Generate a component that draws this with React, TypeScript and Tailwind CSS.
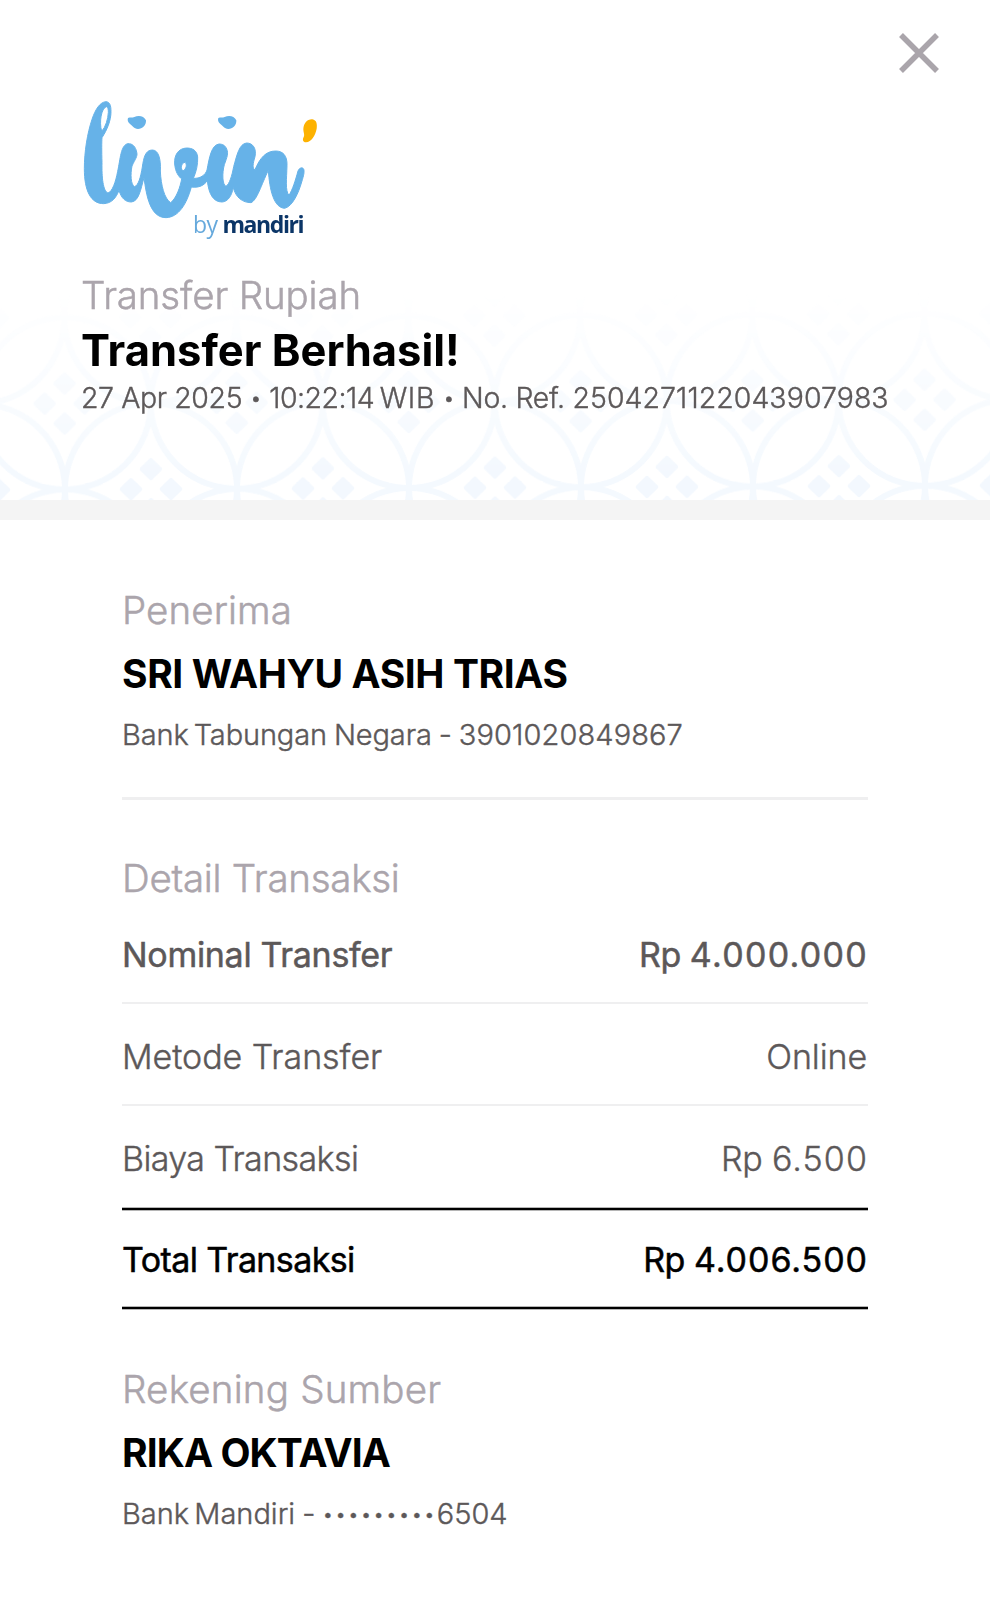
import type { ReactNode } from 'react';

const columns = [-2, -1, 0, 1, 2, 3, 4, 5, 6];

function Medallion({ x, y }: { x: number; y: number }) {
  return (
    <g transform={`translate(${x} ${y})`}>
      <circle r="86" fill="none" stroke="#f4f9fe" strokeWidth="6" />
      {[[0, -20], [20, 0], [0, 20], [-20, 0]].map(([dx, dy]) => (
        <rect
          key={`${dx},${dy}`}
          x="-8.5"
          y="-8.5"
          width="17"
          height="17"
          rx="2"
          transform={`translate(${dx} ${dy}) rotate(45)`}
          fill="#f3f8fe"
        />
      ))}
    </g>
  );
}

function Pattern() {
  return (
    <svg className="absolute bottom-0 left-0 h-[220px] w-full" viewBox="0 280 990 220" aria-hidden="true">
      <defs>
        <linearGradient id="fade" x1="0" y1="0" x2="0" y2="1">
          <stop offset="0.05" stopColor="#000" />
          <stop offset="0.9" stopColor="#fff" />
        </linearGradient>
        <mask id="fadeMask">
          <rect x="0" y="280" width="990" height="220" fill="url(#fade)" />
        </mask>
      </defs>
      <g mask="url(#fadeMask)">
        <g transform="translate(0 2.5) rotate(-0.25 65 487)">
          {columns.map((c) => (
            <g key={c}>
              <Medallion x={65 + c * 172} y={401} />
              <Medallion x={65 + c * 172} y={573} />
              <Medallion x={151 + c * 172} y={315} />
              <Medallion x={151 + c * 172} y={487} />
            </g>
          ))}
        </g>
      </g>
    </svg>
  );
}

function Logo() {
  return (
    <div className="relative h-[160px] w-[260px]">
      <svg className="h-full w-full" viewBox="0 0 780 480" aria-hidden="true">
        <path
          fill="#66b2e8"
          stroke="#66b2e8"
          strokeWidth="3"
          strokeLinejoin="round"
          fillRule="evenodd"
          d="M108 35 C90 36 76 58 66 88 C52 130 43 185 43 236 C43 302 62 341 101 341 C124 340 138 325 147 301 C154 325 166 336 184 336 C207 334 212 298 222 263 C229 316 240 383 288 383 C326 382 350 342 364 291 C388 294 402 286 412 272 C416 312 430 336 456 336 C474 335 485 318 490 292 C496 322 518 338 543 338 C561 331 574 284 595 241 C599 300 611 353 644 355 C668 349 686 308 695 276 C701 257 704 245 701 237 C696 230 688 234 684 243 C676 272 668 298 657 316 C645 302 650 268 651 226 C652 197 639 183 617 183 C587 183 570 204 555 239 C546 237 549 219 555 200 C560 176 549 159 530 159 C508 161 501 194 491 230 C486 257 478 283 468 289 C457 284 456 250 463 224 C471 202 476 190 470 177 C466 166 457 162 447 162 C424 165 418 203 411 240 C406 256 390 266 370 265 C379 246 384 222 383 201 C381 181 367 174 350 174 C325 175 312 195 314 222 C316 246 326 260 335 267 C331 289 320 324 302 338 C283 326 273 286 271 243 C273 208 266 180 247 180 C226 180 221 203 217 231 C212 262 205 286 194 290 C182 285 181 252 186 228 C195 208 204 199 200 186 C197 170 187 160 174 161 C152 164 151 208 143 244 C137 276 127 305 114 309 C99 304 95 261 96 218 C95 184 95 157 96 143 C111 120 123 92 123 65 C123 45 119 36 108 35 Z M109 50 C94 55 87 96 95 124 C107 111 114 87 115 67 C115 58 114 51 109 50 Z M345 217 C333 219 331 237 339 243 C349 237 352 223 345 217 Z"
        />
        {[0, 271].map((x) => (
          <path
            key={x}
            transform={`translate(${x} 0)`}
            fill="#66b2e8"
            d="M174 84 C180 81 187 84 193 81 C205 75 222 77 228 91 C229 106 217 117 204 117 C191 116 188 107 180 102 C173 96 172 90 174 84 Z"
          />
        ))}
        <path
          fill="#fdb200"
          d="M727 88 C740 90 742 103 740 116 C736 137 724 155 708 157 C698 157 697 148 701 141 C705 135 700 128 700 117 C701 100 712 87 727 88 Z"
        />
      </svg>
      <div className="absolute top-[119px] left-[123px] flex items-baseline gap-[5px] font-['Open_Sans',sans-serif] text-[23px] leading-[30px]">
        <span className="tracking-[-0.6px] text-[#66a9dc]">by</span>
        <span className="font-bold tracking-[-1.4px] text-[#0b3567]">mandiri</span>
      </div>
    </div>
  );
}

function Label({ className, children }: { className: string; children: ReactNode }) {
  return (
    <h2 className={`text-[38.5px] leading-[50px] font-light text-[#aba5ac] [-webkit-text-stroke:0.5px_#aba5ac] ${className}`}>
      {children}
    </h2>
  );
}

function Bullet() {
  return <span className="inline-block w-[27px] text-center align-[3px] text-[20px] leading-none">•</span>;
}

export default function App() {
  return (
    <main className="h-[1599px] w-[990px] overflow-hidden bg-white font-[Inter,sans-serif] whitespace-nowrap text-black">
      <header className="relative h-[500px]">
        <Pattern />
        <button aria-label="Tutup" className="absolute top-[33px] right-[51px]">
          <svg className="size-10" viewBox="0 0 40 40" fill="none" stroke="#aaa5ab" strokeWidth="5.5">
            <path d="M2 2 L38 38 M38 2 L2 38" />
          </svg>
        </button>
        <div className="relative pt-[90px]">
          <div className="pl-[70px]">
            <Logo />
          </div>
          <div className="pt-5 pl-[81px]">
            <Label className="tracking-[-0.15px]">Transfer Rupiah</Label>
            <h1 className="mt-[3px] text-[43.5px] leading-[54px] font-bold">Transfer Berhasil!</h1>
            <p className="mt-1 text-[28.5px] leading-[34px] font-light tracking-[-0.4px] text-[#5c5859] [-webkit-text-stroke:0.4px_#5c5859]">
              27 Apr 2025
              <Bullet />
              <span className="tracking-[-0.5px] [word-spacing:-2px]">
                10:22:14 <span className="tracking-[0.6px]">WIB</span>
              </span>
              <Bullet />
              <span className="tracking-[-0.3px]">No. Ref. </span>
              <span className="tracking-[0.05px]">2504271122043907983</span>
            </p>
          </div>
        </div>
      </header>
      <div className="h-5 bg-[#f4f4f4]" />
      <div className="w-[868px] pt-[65px] pl-[122px]">
        <section className="border-b-[3px] border-[#efeff0] pb-[42px]">
          <Label className="tracking-[0.1px]">Penerima</Label>
          <p className="mt-[14px] text-[39px] leading-[50px] font-bold tracking-[-0.4px]">SRI WAHYU ASIH TRIAS</p>
          <p className="mt-4 text-[29px] leading-[40px] font-light tracking-[-0.13px] text-[#5c5859] [-webkit-text-stroke:0.4px_#5c5859]">
            <span className="[word-spacing:-3px]">Bank Tabungan</span>
            <span className="[word-spacing:-1px]"> Negara - </span>
            <span className="tracking-[0.1px]">3901020849867</span>
          </p>
        </section>
        <section className="pt-[53px]">
          <Label className="tracking-[-0.27px]">Detail Transaksi</Label>
          <dl className="text-[34px] leading-[60px] text-[#5c5859]">
            <div className="flex h-[101px] justify-between border-b-2 border-[#efeff0] pt-[22px] [-webkit-text-stroke:0.5px_#5c5859]">
              <dt className="tracking-[-0.3px]">Nominal Transfer</dt>
              <dd className="tracking-[-0.5px]">
                Rp <span className="tracking-[1.3px]">4.000.000</span>
              </dd>
            </div>
            <div className="flex h-[102px] justify-between border-b-2 border-[#efeff0] pt-[23px] font-light [-webkit-text-stroke:0.4px_#5c5859]">
              <dt className="tracking-[-0.05px]">Metode Transfer</dt>
              <dd className="pr-px tracking-[-0.1px]">Online</dd>
            </div>
            <div className="flex h-[104px] justify-between border-b-2 border-black pt-[23px] font-light shadow-[0_1px_0_#b5b5b5,inset_0_-1px_0_#b5b5b5] [-webkit-text-stroke:0.4px_#5c5859]">
              <dt className="tracking-[-0.6px]">Biaya Transaksi</dt>
              <dd className="tracking-[-0.2px]">
                Rp <span className="tracking-[1.1px]">6.500</span>
              </dd>
            </div>
            <div className="flex h-[99px] justify-between border-b-2 border-black pt-[20px] text-black shadow-[0_1px_0_#b5b5b5,inset_0_-1px_0_#b5b5b5] [-webkit-text-stroke:0.5px_#000]">
              <dt className="tracking-[-0.6px]">Total Transaksi</dt>
              <dd className="tracking-[-0.5px]">
                Rp <span className="tracking-[0.95px]">4.006.500</span>
              </dd>
            </div>
          </dl>
        </section>
        <section className="pt-[55px]">
          <Label className="tracking-[0.2px]">Rekening Sumber</Label>
          <p className="mt-[14px] text-[39px] leading-[50px] font-bold tracking-[-0.9px]">RIKA OKTAVIA</p>
          <p className="mt-4 text-[29px] leading-[40px] font-light text-[#5c5859] [-webkit-text-stroke:0.4px_#5c5859]">
            <span className="[word-spacing:-3px]">Bank Mandiri</span>
            <span className="[word-spacing:-1px]"> - </span>
            <span className="align-[3px] text-[19px] leading-none tracking-[2px]">•••••••••</span>6504
          </p>
        </section>
      </div>
    </main>
  );
}
